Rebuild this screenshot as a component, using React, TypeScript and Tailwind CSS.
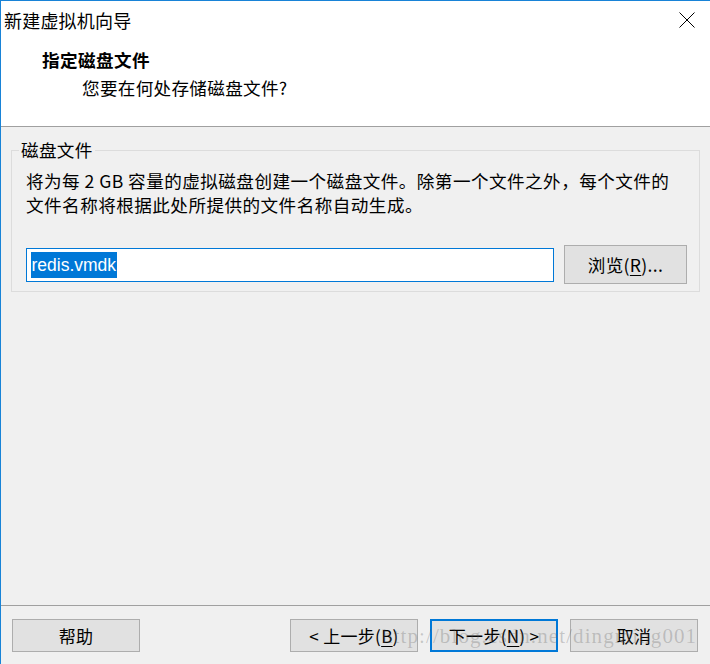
import React from "react";

const U = ({ children }: { children: React.ReactNode }) => (
  <span className="underline underline-offset-[3px] decoration-1">{children}</span>
);

function Btn({
  children,
  primary,
}: {
  children: React.ReactNode;
  primary?: boolean;
}) {
  return (
    <div
      className={
        "w-[128px] h-[33px] flex items-center justify-center bg-[#e1e1e1] text-[17px] leading-none text-black tracking-[0.3px] " +
        (primary ? "border-2 border-[#0078d7]" : "border border-[#adadad]")
      }
    >
      {children}
    </div>
  );
}

export default function App() {
  return (
    <div className="relative w-[710px] h-[664px] bg-[#f0f0f0] border-l border-t border-[#1883d7] flex flex-col overflow-hidden font-['Noto_Sans_CJK_SC',sans-serif] text-black">
      {/* header */}
      <div className="h-[126px] bg-white border-b border-[#a0a0a0] flex flex-col shrink-0">
        <div className="h-[37px] flex items-center justify-between pl-[3px] pr-[15px]">
          <span className="text-[18px] leading-none tracking-[0.2px]">新建虚拟机向导</span>
          <svg width="16" height="16" viewBox="0 0 16 16" className="shrink-0">
            <path d="M0.5 0.5 L15.5 15.5 M15.5 0.5 L0.5 15.5" stroke="#000" strokeWidth="1" fill="none" />
          </svg>
        </div>
        <div className="mt-[10px] pl-[41px] text-[17.6px] leading-[24px] font-bold tracking-[0.4px]">指定磁盘文件</div>
        <div className="mt-[4px] pl-[81px] text-[17.6px] leading-[24px] tracking-[0.3px]">您要在何处存储磁盘文件?</div>
      </div>

      {/* body */}
      <div className="flex-1 flex flex-col">
        <fieldset className="mt-[12px] ml-[10px] mr-[11px] border border-[#dcdcdc] px-0 pb-[7px]">
          <legend className="ml-[7px] px-[2px] text-[17.6px] leading-[22px] tracking-[0.3px]">磁盘文件</legend>
          <div className="pl-[14px] pr-[12px]">
            <div className="mt-[8px] text-[17.6px] tracking-[0.45px]">
              <div className="h-[24px] leading-[24px] whitespace-nowrap">
                将为每 2 GB 容量的虚拟磁盘创建一个磁盘文件。除第一个文件之外，每个文件的
              </div>
              <div className="h-[24px] leading-[24px] whitespace-nowrap">
                文件名称将根据此处所提供的文件名称自动生成。
              </div>
            </div>
            <div className="mt-[28px] flex items-center gap-[10px]">
              <div className="w-[528px] h-[34px] bg-white border border-[#0078d7] flex items-center pl-[4px]">
                <span className="bg-[#0078d7] text-white font-['Liberation_Sans',sans-serif] text-[17.5px] leading-[26px] px-[0.5px]">
                  redis.vmdk
                </span>
              </div>
              <div className="w-[123px] h-[39px] bg-[#e1e1e1] border border-[#adadad] flex items-center justify-center text-[17.6px] leading-none tracking-[0.3px]">
                浏览(<U>R</U>)...
              </div>
            </div>
          </div>
        </fieldset>
      </div>

      {/* footer */}
      <div className="h-[59px] border-t border-[#a0a0a0] shrink-0 flex items-start pt-[13px] pl-[11px] pr-[12px]">
        <Btn>帮助</Btn>
        <div className="flex-1" />
        <div className="flex gap-[12px]">
          <Btn>
            &lt;&nbsp;上一步(<U>B</U>)
          </Btn>
          <Btn primary>
            下一步(<U>N</U>)&nbsp;&gt;
          </Btn>
          <Btn>取消</Btn>
        </div>
      </div>

      {/* watermark */}
      <div className="pointer-events-none absolute left-[381px] top-[621px] font-['Liberation_Serif',serif] text-[21px] leading-[28px] tracking-[1.1px] text-[rgba(90,90,90,0.28)] whitespace-nowrap">
        http://blog.csdn.net/dingming001
      </div>
    </div>
  );
}
